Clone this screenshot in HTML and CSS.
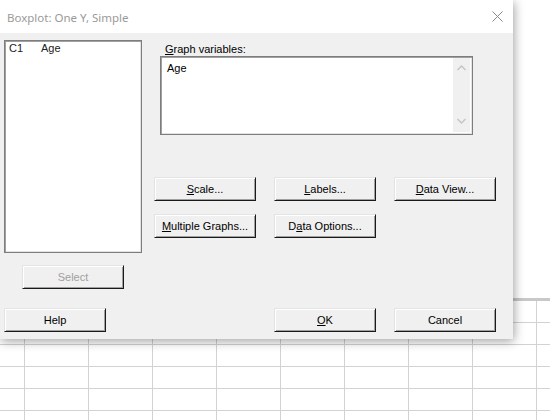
FILE: index.html
```html
<!DOCTYPE html>
<html>
<head>
<meta charset="utf-8">
<link rel="stylesheet" href="styles.css">
</head>
<body>
<div class="sheet"></div>
<div class="dialog">
  <div class="titlebar">
    <span class="title">Boxplot: One Y, Simple</span>
    <svg class="close" width="11" height="11" viewBox="0 0 11 11"><path d="M0.5 0.5 L10.5 10.5 M10.5 0.5 L0.5 10.5" stroke="#8a8a8a" stroke-width="1" fill="none"/></svg>
  </div>
  <div class="content">
    <div class="left">
      <div class="listbox">
        <div class="listrow"><span class="col">C1</span><span>Age</span></div>
      </div>
      <button class="btn select" disabled>Select</button>
    </div>
    <div class="right">
      <div class="label"><u>G</u>raph variables:</div>
      <div class="textbox">
        <div class="textbox-text">Age</div>
        <div class="scrollbar">
          <svg width="9" height="6" viewBox="0 0 9 6"><path d="M0.5 5 L4.5 1 L8.5 5" stroke="#c4c4c4" stroke-width="1.4" fill="none"/></svg>
          <svg width="9" height="6" viewBox="0 0 9 6"><path d="M0.5 1 L4.5 5 L8.5 1" stroke="#c4c4c4" stroke-width="1.4" fill="none"/></svg>
        </div>
      </div>
      <div class="btnrow first">
        <button class="btn"><u>S</u>cale...</button>
        <button class="btn"><u>L</u>abels...</button>
        <button class="btn"><u>D</u>ata View...</button>
      </div>
      <div class="btnrow second">
        <button class="btn"><u>M</u>ultiple Graphs...</button>
        <button class="btn">D<u>a</u>ta Options...</button>
      </div>
    </div>
  </div>
  <div class="footer">
    <button class="btn">Help</button>
    <div class="footer-right">
      <button class="btn"><u>O</u>K</button>
      <button class="btn">Cancel</button>
    </div>
  </div>
</div>
</body>
</html>
```
FILE: styles.css
```css
html, body {
  margin: 0;
  padding: 0;
  width: 550px;
  height: 420px;
  overflow: hidden;
  background: #ffffff;
}

.sheet {
  margin-top: 298px;
  height: 122px;
  border-top: 3px solid #c8c8c8;
  background-color: #ffffff;
  background-image:
    linear-gradient(to right, #d2d2d2 1px, transparent 1px),
    linear-gradient(to bottom, #d2d2d2 1px, transparent 1px);
  background-size: 64px 100%, 100% 22px;
  background-position: 24px 0, 0 21px;
}

.dialog {
  position: absolute;
  left: 0;
  top: 0;
  width: 513px;
  height: 339px;
  background: #f0f0f0;
  box-shadow: 1px 2px 10px rgba(0, 0, 0, 0.38);
  font-family: "Liberation Sans", Arial, sans-serif;
  font-size: 11px;
  color: #000;
}

.titlebar {
  height: 33px;
  background: #ffffff;
  display: flex;
  align-items: center;
  justify-content: space-between;
  padding: 0 10px 0 7px;
}

.title {
  font-family: "Noto Sans", sans-serif;
  font-size: 11.5px;
  color: #9a9a9a;
  margin-top: 2px;
}

.close {
  display: block;
  margin-top: 0;
}

.content {
  display: flex;
  padding: 7px 0 0 4px;
}

.left {
  width: 138px;
  display: flex;
  flex-direction: column;
}

.listbox {
  height: 213px;
  box-sizing: border-box;
  background: #ffffff;
  border: 1px solid #7d7d7d;
  box-shadow: inset 1px 1px 0 #a0a0a0, inset -1px -1px 0 #e3e3e3;
  padding: 1px 2px;
}

.listrow {
  display: flex;
  line-height: 13px;
  color: #222;
  padding-left: 2px;
}

.col {
  width: 32px;
}

.btn {
  width: 102px;
  height: 24px;
  box-sizing: border-box;
  margin: 0;
  padding: 0;
  background: #f0f0f0;
  border-style: solid;
  border-width: 1px;
  border-color: #e3e3e3 #1a1a1a #1a1a1a #e3e3e3;
  box-shadow: inset 1px 1px 0 #ffffff, inset -1px -1px 0 #a0a0a0;
  font-family: "Liberation Sans", Arial, sans-serif;
  font-size: 11px;
  color: #000;
  text-align: center;
  line-height: 20px;
}

.btn:disabled {
  color: #a0a0a0;
}

.select {
  margin: 12px 0 0 18px;
}

.right {
  margin-left: 12px;
  padding-top: 2px;
}

.label {
  line-height: 14px;
  padding-left: 11px;
  color: #000;
}

.textbox {
  margin-left: 6px;
  width: 313px;
  height: 79px;
  box-sizing: border-box;
  background: #ffffff;
  border: 1px solid #7d7d7d;
  box-shadow: inset 1px 1px 0 #a0a0a0, inset -1px -1px 0 #e3e3e3;
  display: flex;
  padding: 1px;
}

.textbox-text {
  flex: 1;
  padding: 4px 5px;
  line-height: 13px;
  color: #000;
}

.scrollbar {
  width: 17px;
  background: #f0f0f0;
  display: flex;
  flex-direction: column;
  justify-content: space-between;
  align-items: center;
  padding: 7px 0 8px;
  box-sizing: border-box;
  margin-bottom: 1px;
  margin-right: 1px;
}

.scrollbar svg {
  display: block;
}

.btnrow {
  display: flex;
  gap: 18px;
}

.btnrow.first {
  margin-top: 42px;
}

.btnrow.second {
  margin-top: 13px;
}

.footer {
  display: flex;
  padding-left: 4px;
  margin-top: 19px;
}

.footer-right {
  display: flex;
  gap: 18px;
  margin-left: 168px;
}
```
